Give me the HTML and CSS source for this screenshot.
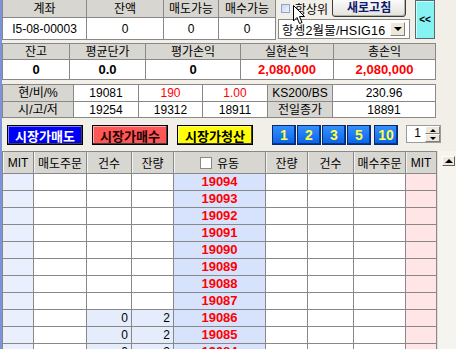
FILE: index.html
```html
<!DOCTYPE html>
<html lang="ko">
<head>
    <meta charset="UTF-8">
    <title>해외선물 주문</title>
    <link rel="stylesheet" href="styles.css">
</head>
<body>
    <div class="screen">
        <div class="top">
            <div class="grid acct">
                <div class="hd">계좌</div>
                <div class="hd">잔액</div>
                <div class="hd">매도가능</div>
                <div class="hd">매수가능</div>
                <div class="cell">I5-08-00003</div>
                <div class="cell">0</div>
                <div class="cell">0</div>
                <div class="cell">0</div>
            </div>
            <div class="controls">
                <div class="ctrl-row">
                    <label class="chk"><span class="box"></span>항상위</label>
                    <button class="refresh">새로고침</button>
                </div>
                <div class="combo">
                    <span class="combo-text">항셍2월물/HSIG16</span>
                    <span class="drop"><span class="tri-down"></span></span>
                </div>
            </div>
            <button class="collapse">&lt;&lt;</button>
        </div>

        <div class="grid pnl">
            <div class="hd">잔고</div>
            <div class="hd">평균단가</div>
            <div class="hd">평가손익</div>
            <div class="hd">실현손익</div>
            <div class="hd">총손익</div>
            <div class="cell strong">0</div>
            <div class="cell strong">0.0</div>
            <div class="cell strong">0</div>
            <div class="cell strong red">2,080,000</div>
            <div class="cell strong red">2,080,000</div>
        </div>

        <div class="grid quote">
            <div class="hd">현/비/%</div>
            <div class="cell">19081</div>
            <div class="cell red">190</div>
            <div class="cell red">1.00</div>
            <div class="hd">KS200/BS</div>
            <div class="cell">230.96</div>
            <div class="hd">시/고/저</div>
            <div class="cell">19254</div>
            <div class="cell">19312</div>
            <div class="cell">18911</div>
            <div class="hd">전일종가</div>
            <div class="cell">18891</div>
        </div>

        <div class="actions">
            <button class="mkt sell">시장가매도</button>
            <button class="mkt buy">시장가매수</button>
            <button class="mkt clear">시장가청산</button>
            <div class="nums">
                <button class="num">1</button>
                <button class="num">2</button>
                <button class="num">3</button>
                <button class="num">5</button>
                <button class="num wide">10</button>
            </div>
            <div class="spin">
                <span class="spin-val">1</span>
                <span class="spin-btns">
                    <span class="spin-btn"><span class="tri-up"></span></span>
                    <span class="spin-btn"><span class="tri-down"></span></span>
                </span>
            </div>
        </div>

        <div class="book-wrap">
            <div class="grid book" id="book">
                <div class="bh">MIT</div>
                <div class="bh">매도주문</div>
                <div class="bh">건수</div>
                <div class="bh">잔량</div>
                <div class="bh"><span class="hbox"></span>유동</div>
                <div class="bh">잔량</div>
                <div class="bh">건수</div>
                <div class="bh">매수주문</div>
                <div class="bh">MIT</div>
            </div>
            <div class="vscroll">
                <span class="scroll-up"><span class="tri-up"></span></span>
            </div>
        </div>

        <svg class="cursor" width="13" height="20" viewBox="0 0 13 20">
            <path d="M0.5 0.5 L0.5 16 L4 12.5 L6.5 18.5 L9 17.5 L6.5 11.5 L11.5 11.5 Z" fill="#fff" stroke="#000" stroke-width="1"/>
        </svg>
    </div>

    <script>
        // price ladder: [price, 매도건수, 매도잔량]
        const rows = [
            [19094], [19093], [19092], [19091], [19090], [19089],
            [19088], [19087], [19086, 0, 2], [19085, 0, 2], [19084, 0, 2]
        ];

        const book = document.getElementById('book');
        rows.forEach(function (r) {
            const filled = r.length > 1;
            const cells = [
                ['mit-l', ''],
                ['blank', ''],
                [filled ? 'qty' : 'blank', filled ? r[1] : ''],
                [filled ? 'qty' : 'blank', filled ? r[2] : ''],
                ['price', r[0]],
                ['blank', ''],
                ['blank', ''],
                ['blank', ''],
                ['mit-r', '']
            ];
            cells.forEach(function (c) {
                const div = document.createElement('div');
                div.className = 'bc ' + c[0];
                div.textContent = c[1];
                book.appendChild(div);
            });
        });
    </script>
</body>
</html>
```

FILE: styles.css
```css
html, body {
    margin: 0;
    height: 100%;
    overflow: hidden;
}

body {
    background-color: #f1efe8;
    font-family: "Liberation Sans", "Noto Sans CJK KR", sans-serif;
    font-size: 12px;
    color: #000;
}

button {
    font-family: "Liberation Sans", "Noto Sans CJK KR", sans-serif;
    padding: 0;
    cursor: default;
}

.screen {
    position: relative;
    height: 349px;
    border-left: 2px solid #7b93db;
}

/* grid tables */
.grid {
    display: grid;
    gap: 1px;
    width: max-content;
    background-color: #888;
    border: 1px solid #888;
}

.hd, .cell {
    display: flex;
    align-items: center;
    justify-content: center;
    white-space: nowrap;
    line-height: 1;
}

.hd {
    background-color: #d8d6d0;
}

.cell {
    background-color: #fff;
}

.strong {
    font-weight: bold;
    font-size: 13px;
}

.red {
    color: #ff0000;
}

/* top row */
.top {
    display: flex;
    height: 40px;
}

.acct {
    grid-template-columns: 83px 76px 54px 56px;
    grid-template-rows: 17px 21px;
    margin-top: -1px;
    align-self: flex-start;
}

.controls {
    width: 132px;
    margin-left: 2px;
    display: flex;
    flex-direction: column;
}

.ctrl-row {
    height: 19px;
    display: flex;
    align-items: flex-start;
}

.chk {
    display: flex;
    align-items: center;
    gap: 5px;
    margin-top: 1px;
    margin-left: 3px;
    height: 14px;
}

.chk .box {
    width: 7px;
    height: 7px;
    border: 1px solid #8aa6cf;
    background: linear-gradient(135deg, #c9d9ef, #eef3fb);
}

.refresh {
    margin-left: 4px;
    margin-top: -4px;
    width: 74px;
    height: 21px;
    border: 1px solid #3c3c3c;
    border-radius: 3px;
    background: linear-gradient(#ffffff, #e4e2dc);
    color: #0c1a6e;
    font-weight: bold;
    font-size: 12px;
    box-shadow: inset -1px -1px #b5b2a8;
}

.combo {
    height: 18px;
    border: 1px solid #8a8a8a;
    background-color: #fff;
    display: flex;
    align-items: center;
    justify-content: space-between;
    overflow: hidden;
}

.combo-text {
    padding-left: 3px;
    font-size: 12.5px;
    letter-spacing: 0.2px;
    white-space: nowrap;
}

.drop {
    flex: none;
    width: 15px;
    height: 14px;
    margin-right: 4px;
    background-color: #ece9d8;
    border: 1px solid #fff;
    border-right-color: #808080;
    border-bottom-color: #808080;
    box-sizing: border-box;
    display: flex;
    align-items: center;
    justify-content: center;
}

.tri-down {
    width: 0;
    height: 0;
    border-left: 4px solid transparent;
    border-right: 4px solid transparent;
    border-top: 4px solid #000;
}

.tri-up {
    width: 0;
    height: 0;
    border-left: 4px solid transparent;
    border-right: 4px solid transparent;
    border-bottom: 4px solid #000;
}

.collapse {
    margin-left: 5px;
    width: 20px;
    height: 39px;
    background-color: #86f2f2;
    border: 1px solid #5a6a6a;
    box-shadow: inset 1px 1px #c8ffff;
    font-weight: bold;
    font-size: 10px;
    color: #000;
}

.pnl {
    grid-template-columns: 66px 75px 94px 92px 101px;
    grid-template-rows: 15px 19px;
    margin-top: 3px;
}

.quote {
    grid-template-columns: 70px 64px 63px 64px 64px 102px;
    grid-template-rows: 16px 15px;
    margin-top: 4px;
}

/* order buttons */
.actions {
    display: flex;
    align-items: flex-start;
    margin-top: 7px;
    padding-left: 5px;
    height: 20px;
}

.mkt {
    width: 76px;
    height: 20px;
    margin-right: 9px;
    border: 1px solid #000;
    box-shadow: inset -1px -1px #404040, inset 1px 1px rgba(255, 255, 255, 0.5);
    font-weight: bold;
    font-size: 13px;
}

.sell {
    background-color: #0000f8;
    color: #fff;
}

.buy {
    background-color: #ff5656;
    color: #200000;
}

.clear {
    background-color: #ffff00;
    color: #000;
}

.nums {
    display: flex;
    gap: 1px;
    margin-left: 10px;
}

.num {
    width: 24px;
    height: 20px;
    border: 1px solid #0a2a6a;
    background: linear-gradient(#3590ff, #0a62e8);
    box-shadow: inset -1px -1px #003a9a;
    color: #ffff40;
    font-weight: bold;
    font-size: 14px;
}

.num.wide {
    margin-left: 2px;
}

.spin {
    margin-left: 8px;
    width: 35px;
    height: 18px;
    border: 1px solid #9a9a9a;
    background-color: #fff;
    display: flex;
    box-sizing: border-box;
}

.spin-val {
    flex: 1;
    text-align: right;
    padding-right: 4px;
    line-height: 15px;
}

.spin-btns {
    width: 15px;
    display: flex;
    flex-direction: column;
}

.spin-btn {
    flex: 1;
    background-color: #ece9d8;
    border: 1px solid #fff;
    border-right-color: #808080;
    border-bottom-color: #808080;
    display: flex;
    align-items: center;
    justify-content: center;
}

.spin-btn .tri-up,
.spin-btn .tri-down {
    border-left-width: 3px;
    border-right-width: 3px;
    border-top-width: 3px;
    border-bottom-width: 3px;
}

.spin-btn .tri-up {
    border-top: 0;
}

.spin-btn .tri-down {
    border-bottom: 0;
}

/* price ladder */
.book-wrap {
    display: flex;
    margin-top: 6px;
}

.book {
    grid-template-columns: 30px 52px 44px 41px 91px 41px 45px 51px 30px;
    grid-template-rows: 21px;
    grid-auto-rows: 16px;
    align-self: flex-start;
}

.bh {
    background-color: #d8d6d0;
    box-shadow: inset 1px 0 #f4f3f0;
    display: flex;
    align-items: center;
    justify-content: center;
    white-space: nowrap;
}

.hbox {
    width: 10px;
    height: 10px;
    border: 1px solid #8a8a8a;
    background-color: #fff;
    margin-right: 5px;
}

.bc {
    text-align: right;
    padding-right: 3px;
    line-height: 16px;
}

.mit-l {
    background-color: #e9effc;
}

.blank {
    background-color: #fff;
}

.qty {
    background-color: #e5edfc;
}

.price {
    background-color: #d7e3fc;
    color: #ff0000;
    font-weight: bold;
    font-size: 13px;
    text-align: center;
    padding-right: 0;
}

.mit-r {
    background-color: #ffe5e5;
}

.vscroll {
    flex: 1;
    height: 200px;
    background-color: #f5f4ef;
    border-left: 1px solid #e2e0d8;
    padding: 5px 0 0 4px;
}

.scroll-up {
    width: 13px;
    height: 10px;
    box-sizing: border-box;
    background-color: #ece9d8;
    border: 1px solid #fff;
    border-right-color: #606060;
    border-bottom-color: #606060;
    display: flex;
    align-items: center;
    justify-content: center;
}

.cursor {
    position: absolute;
    left: 291px;
    top: 5px;
}
```
